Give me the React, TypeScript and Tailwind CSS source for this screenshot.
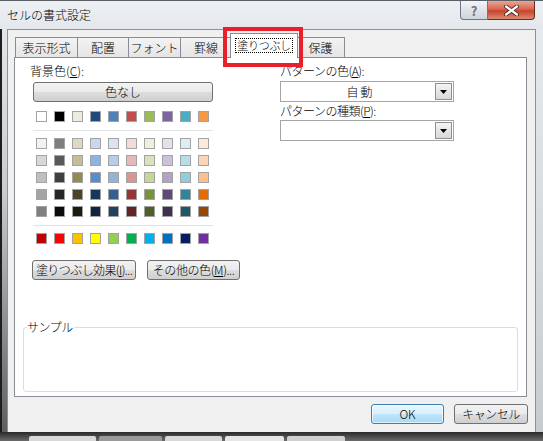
import React from 'react'

const jp = { fontFamily: '"Noto Sans CJK JP", "Noto Sans", sans-serif' }

const baseRow = [
  'bg-[#ffffff]', 'bg-[#000000]', 'bg-[#eeece1]', 'bg-[#1f497d]', 'bg-[#4f81bd]',
  'bg-[#c0504d]', 'bg-[#9bbb59]', 'bg-[#8064a2]', 'bg-[#4bacc6]', 'bg-[#f79646]',
]

const tintRows = [
  ['bg-[#f2f2f2]', 'bg-[#7f7f7f]', 'bg-[#ddd9c3]', 'bg-[#c6d9f0]', 'bg-[#dbe5f1]', 'bg-[#f2dcdb]', 'bg-[#ebf1dd]', 'bg-[#e5e0ec]', 'bg-[#dbeef3]', 'bg-[#fdeada]'],
  ['bg-[#d8d8d8]', 'bg-[#595959]', 'bg-[#c4bd97]', 'bg-[#8db3e2]', 'bg-[#b8cce4]', 'bg-[#e5b9b7]', 'bg-[#d7e3bc]', 'bg-[#ccc1d9]', 'bg-[#b7dde8]', 'bg-[#fbd5b5]'],
  ['bg-[#bfbfbf]', 'bg-[#3f3f3f]', 'bg-[#938953]', 'bg-[#548dd4]', 'bg-[#95b3d7]', 'bg-[#d99694]', 'bg-[#c3d69b]', 'bg-[#b2a2c7]', 'bg-[#92cddc]', 'bg-[#fac08f]'],
  ['bg-[#a5a5a5]', 'bg-[#262626]', 'bg-[#494429]', 'bg-[#17365d]', 'bg-[#366092]', 'bg-[#953734]', 'bg-[#76923c]', 'bg-[#5f497a]', 'bg-[#31859b]', 'bg-[#e36c09]'],
  ['bg-[#7f7f7f]', 'bg-[#0c0c0c]', 'bg-[#1d1b10]', 'bg-[#0f243e]', 'bg-[#244061]', 'bg-[#632423]', 'bg-[#4f6128]', 'bg-[#3f3151]', 'bg-[#205867]', 'bg-[#974806]'],
]

const standardRow = [
  'bg-[#c00000]', 'bg-[#ff0000]', 'bg-[#ffc000]', 'bg-[#ffff00]', 'bg-[#92d050]',
  'bg-[#00b050]', 'bg-[#00b0f0]', 'bg-[#0070c0]', 'bg-[#002060]', 'bg-[#7030a0]',
]

function Swatches({ colors }: { colors: string[] }) {
  return (
    <div className="flex gap-[7px]">
      {colors.map((c, i) => (
        <div key={i} className={`w-[11px] h-[11px] border border-[#a3a3a3] ${c}`} />
      ))}
    </div>
  )
}

function Separator() {
  return <div className="ml-[18px] w-[180px] h-px bg-[#e2e3e4]" />
}

function WinButton({ children, className = '' }: { children: React.ReactNode; className?: string }) {
  return (
    <div
      className={`h-[20px] flex items-center justify-center whitespace-nowrap rounded-[3px] border border-[#707070] bg-[linear-gradient(#f2f2f2_0%,#ebebeb_48%,#dddddd_52%,#cfcfcf_100%)] text-[12px] leading-[14px] text-black ${className}`}
    >
      {children}
    </div>
  )
}

function Combo({ value }: { value?: string }) {
  return (
    <div className="w-[174px] h-[21px] border border-[#a5a5a5] bg-white flex items-center p-px">
      <div className="flex-1 text-center text-[12px] leading-[14px] pl-[4px] tracking-[2px]">{value}</div>
      <div className="w-[17px] h-[17px] border border-[#8f8f8f] bg-[linear-gradient(#f4f4f4,#d8d8d8)] flex items-center justify-center">
        <svg width="7" height="4" viewBox="0 0 7 4">
          <path d="M0 0h7L3.5 4z" fill="#000" />
        </svg>
      </div>
    </div>
  )
}

const tabs = [
  { label: '表示形式', w: 'w-[63px]' },
  { label: '配置', w: 'w-[52px]' },
  { label: 'フォント', w: 'w-[53px]' },
  { label: '罫線', w: 'w-[52px]' },
]

export default function App() {
  return (
    <div
      className="w-[543px] h-[441px] overflow-hidden relative flex flex-col bg-[#dfe3e7] text-black font-light whitespace-nowrap"
      style={jp}
    >
      {/* title bar */}
      <div className="h-[29px] flex border-t border-[#5a5f66] bg-[linear-gradient(#eef1f4,#e3e7eb)]">
        <div className="ml-[7px] mt-[6px] text-[12px] leading-[16px] text-black">セルの書式設定</div>
        <div className="ml-auto mr-[8px] flex items-start">
          <div className="w-[28px] h-[19px] rounded-bl-[4px] border border-t-0 border-[#6d7784] bg-[linear-gradient(#f4f6f8,#dde2e7_55%,#cfd5dc)] flex items-center justify-center text-[13px] leading-none text-[#6d747c] font-bold">
            ?
          </div>
          <div className="w-[47px] h-[19px] rounded-br-[4px] border border-l-0 border-t-0 border-[#6b2b20] bg-[linear-gradient(#eaa596,#d86750_45%,#c7432d_55%,#d98a72)] flex items-center justify-center">
            <svg width="15" height="11" viewBox="0 0 15 11">
              <path d="M2 1.5l11 8M13 1.5l-11 8" stroke="#4a2a24" strokeWidth="4" strokeLinecap="round" />
              <path d="M2 1.5l11 8M13 1.5l-11 8" stroke="#fff" strokeWidth="2.2" strokeLinecap="round" />
            </svg>
          </div>
        </div>
      </div>

      <div className="flex h-[403px]">
        <div className="w-[7px] border-l-2 border-[#1e1e1e] bg-[linear-gradient(#e2e6ea,#c9cdd1_40%,#5d5f61)]" />

        {/* client */}
        <div className="w-[528px] bg-[#f0f0f0] border-t border-l border-[#8d9299] flex flex-col">
          <div className="h-[27px] pl-[7px] flex items-end">
            {tabs.map((t) => (
              <div
                key={t.label}
                className={`${t.w} -mr-px h-[20px] border border-b-0 border-[#898c95] bg-[linear-gradient(#f3f3f3,#e5e5e5)] flex items-center justify-center text-[12px] leading-[14px]`}
              >
                {t.label}
              </div>
            ))}
            <div className="relative z-10 -ml-[1px] -mr-[2px] -mb-px w-[68px] h-[25px] border border-b-0 border-[#898c95] bg-white flex items-start justify-center pt-[4px]">
              <span className="border border-dotted border-black px-px text-[11px] leading-[13px] tracking-[-0.3px]">塗りつぶし</span>
            </div>
            <div className="w-[49px] h-[20px] border border-b-0 border-[#898c95] bg-[linear-gradient(#f3f3f3,#e5e5e5)] flex items-center justify-center text-[12px] leading-[14px]">
              保護
            </div>
          </div>

          {/* panel */}
          <div className="ml-[6px] w-[513px] h-[340px] border border-[#898c95] bg-white flex flex-col text-[12px] leading-[14px]">
            <div className="flex">
              <div className="w-[265px] flex flex-col">
                <div className="ml-[15px] mt-[6px]">
                  背景色(<span className="underline">C</span>):
                </div>
                <WinButton className="ml-[18px] mt-[4px] w-[180px]">色なし</WinButton>
                <div className="ml-[21px] mt-[9px]">
                  <Swatches colors={baseRow} />
                </div>
                <div className="mt-[8px]">
                  <Separator />
                </div>
                <div className="ml-[21px] mt-[7px] flex flex-col gap-[6px]">
                  {tintRows.map((r, i) => (
                    <Swatches key={i} colors={r} />
                  ))}
                </div>
                <div className="mt-[8px]">
                  <Separator />
                </div>
                <div className="ml-[21px] mt-[7px]">
                  <Swatches colors={standardRow} />
                </div>
                <div className="ml-[17px] mt-[16px] flex gap-[11px]">
                  <WinButton className="w-[104px] text-[11px] tracking-[-0.6px]">
                    塗りつぶし効果(<span className="underline">I</span>)...
                  </WinButton>
                  <WinButton className="w-[93px] text-[11px] tracking-[-0.4px]">
                    その他の色(<span className="underline">M</span>)...
                  </WinButton>
                </div>
              </div>

              <div className="flex flex-col">
                <div className="mt-[6px] tracking-[-0.5px]">
                  パターンの色(<span className="underline">A</span>):
                </div>
                <div className="mt-[3px]">
                  <Combo value="自動" />
                </div>
                <div className="mt-[2px] tracking-[-0.5px]">
                  パターンの種類(<span className="underline">P</span>):
                </div>
                <div className="mt-[2px]">
                  <Combo />
                </div>
              </div>
            </div>

            <fieldset className="mt-auto mx-[8px] mb-[4px] h-[72px] border border-[#d5dfe5] rounded-[3px]">
              <legend className="ml-[3px] pr-[1px] text-[12px] leading-[14px] tracking-[-0.5px]">サンプル</legend>
            </fieldset>
          </div>

          <div className="mt-[7px] pr-[7px] flex justify-end gap-[10px]">
            <div className="w-[73px] h-[20px] rounded-[3px] border border-[#3c7fb1] bg-[linear-gradient(#eaf6fd,#d9f0fc_48%,#bee6fd_52%,#a7d9f5)] shadow-[inset_0_0_0_1px_#ffffffaa] flex items-center justify-center text-[12px] leading-[14px]">
              OK
            </div>
            <WinButton className="w-[74px] tracking-[-0.5px]">キャンセル</WinButton>
          </div>
        </div>

        <div className="w-[8px] border-l border-[#8d9299] bg-[linear-gradient(#e6eaee,#d4d8dc_60%,#c7cbcf)]" />
      </div>

      {/* bottom frame + taskbar strip */}
      <div className="h-[9px] bg-[linear-gradient(#2a2a2a,#6b6b6b)] flex items-end pl-[29px] gap-[3px]">
        <div className="w-[67px] h-[5px] rounded-t-[2px] bg-[#d8d8d8]" />
        <div className="w-[63px] h-[5px] rounded-t-[2px] bg-[#9a9a9a]" />
        <div className="w-[57px] h-[5px] rounded-t-[2px] bg-[#d8d8d8]" />
        <div className="w-[59px] h-[5px] rounded-t-[2px] bg-[#e6e6e6]" />
        <div className="w-[58px] h-[5px] rounded-t-[2px] bg-[#d0d0d0]" />
      </div>

      {/* red highlight annotation */}
      <div className="absolute left-[223px] top-[27px] w-[80px] h-[40px] border-[4px] border-[#e8202a] pointer-events-none" />
    </div>
  )
}
